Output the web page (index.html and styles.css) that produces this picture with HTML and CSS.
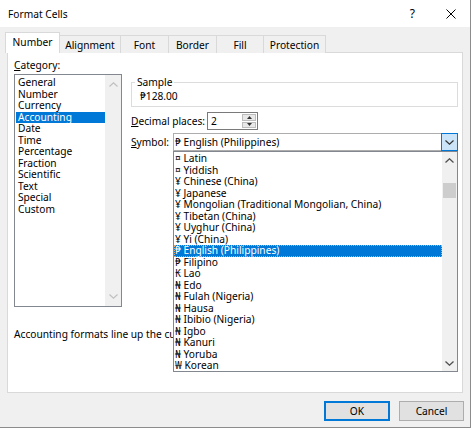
FILE: index.html
```html
<!DOCTYPE html>
<html>
<head>
<meta charset="utf-8">
<link rel="stylesheet" href="styles.css">
</head>
<body>
<div class="dialog">
  <div class="titlebar">
    <span class="title">Format Cells</span>
    <span class="help">?</span>
    <span class="close"><svg width="10" height="10" viewBox="0 0 10 10"><path d="M0.5 0.5 L9.5 9.5 M9.5 0.5 L0.5 9.5" stroke="#000" stroke-width="1" fill="none"/></svg></span>
  </div>
  <div class="tabs">
    <div class="tab active w-number">Number</div>
    <div class="tab w-align">Alignment</div>
    <div class="tab w-font">Font</div>
    <div class="tab w-border">Border</div>
    <div class="tab w-fill">Fill</div>
    <div class="tab w-prot">Protection</div>
  </div>
  <div class="panel">
    <div class="cols">
      <div class="leftcol">
        <div class="lbl"><u>C</u>ategory:</div>
        <div class="listbox">
          <ul class="items">
            <li>General</li>
            <li>Number</li>
            <li>Currency</li>
            <li class="sel">Accounting</li>
            <li>Date</li>
            <li>Time</li>
            <li>Percentage</li>
            <li>Fraction</li>
            <li>Scientific</li>
            <li>Text</li>
            <li>Special</li>
            <li>Custom</li>
          </ul>
          <div class="vscroll disabled">
            <svg class="arrow" width="9" height="5" viewBox="0 0 9 5"><path d="M0.5 4.5 L4.5 0.8 L8.5 4.5" stroke="#c0c0c0" stroke-width="1.2" fill="none"/></svg>
            <svg class="arrow" width="9" height="5" viewBox="0 0 9 5"><path d="M0.5 0.5 L4.5 4.2 L8.5 0.5" stroke="#c0c0c0" stroke-width="1.2" fill="none"/></svg>
          </div>
        </div>
      </div>
      <div class="rightcol">
        <fieldset class="sample">
          <legend>Sample</legend>
          <div class="sample-val">₱128.00</div>
        </fieldset>
        <div class="row dec">
          <span class="rlabel dec-label"><u>D</u>ecimal places:</span>
          <div class="spin">
            <span class="spin-val">2</span>
            <div class="spinbtns">
              <span class="sb"><svg width="5" height="3" viewBox="0 0 5 3"><path d="M0 3 L2.5 0 L5 3 Z" fill="#333"/></svg></span>
              <span class="sb"><svg width="5" height="3" viewBox="0 0 5 3"><path d="M0 0 L2.5 3 L5 0 Z" fill="#333"/></svg></span>
            </div>
          </div>
        </div>
        <div class="row sym">
          <span class="rlabel sym-label"><u>S</u>ymbol:</span>
          <div class="combo">
            <span class="combo-val">₱ English (Philippines)</span>
            <span class="dropbtn"><svg width="9" height="5" viewBox="0 0 9 5"><path d="M0.5 0.5 L4.5 4.2 L8.5 0.5" stroke="#333" stroke-width="1.2" fill="none"/></svg></span>
            <div class="droplist">
              <ul class="ditems">
                <li>¤ Latin</li>
                <li>¤ Yiddish</li>
                <li>¥ Chinese (China)</li>
                <li>¥ Japanese</li>
                <li>¥ Mongolian (Traditional Mongolian, China)</li>
                <li>¥ Tibetan (China)</li>
                <li>¥ Uyghur (China)</li>
                <li>¥ Yi (China)</li>
                <li class="sel">₱ English (Philippines)</li>
                <li>₱ Filipino</li>
                <li>₭ Lao</li>
                <li>₦ Edo</li>
                <li>₦ Fulah (Nigeria)</li>
                <li>₦ Hausa</li>
                <li>₦ Ibibio (Nigeria)</li>
                <li>₦ Igbo</li>
                <li>₦ Kanuri</li>
                <li>₦ Yoruba</li>
                <li>₩ Korean</li>
              </ul>
              <div class="dscroll">
                <svg class="arrow" width="9" height="5" viewBox="0 0 9 5"><path d="M0.5 4.5 L4.5 0.8 L8.5 4.5" stroke="#505050" stroke-width="1.3" fill="none"/></svg>
                <div class="thumb"></div>
                <div class="spacer"></div>
                <svg class="arrow" width="9" height="5" viewBox="0 0 9 5"><path d="M0.5 0.5 L4.5 4.2 L8.5 0.5" stroke="#505050" stroke-width="1.3" fill="none"/></svg>
              </div>
            </div>
          </div>
        </div>
      </div>
    </div>
    <div class="explain">Accounting formats line up the currency symbols and decimal points in a column.</div>
  </div>
  <div class="buttons">
    <button class="btn ok">OK</button>
    <button class="btn cancel">Cancel</button>
  </div>
</div>
</body>
</html>
```

FILE: styles.css
```css
* { box-sizing: border-box; }
html, body { margin: 0; padding: 0; }
body {
  background: #ffffff;
  font-family: "Noto Sans", "DejaVu Sans", sans-serif;
  font-size: 10.2px;
  color: #000;
}
ul { list-style: none; margin: 0; padding: 0; }

.dialog {
  width: 471px;
  height: 428px;
  background: #f0f0f0;
  border-right: 1px solid #8c8c8c;
  border-bottom: 1px solid #8c8c8c;
  display: flex;
  flex-direction: column;
}

.titlebar {
  height: 27px;
  background: #fff;
  display: flex;
  align-items: center;
  padding-left: 8px;
  flex-shrink: 0;
}
.title { font-size: 10.2px; }
.help { margin-left: auto; font-size: 12px; margin-right: 31px; }
.close { width: 10px; height: 10px; display: flex; margin-right: 14px; }

.tabs {
  height: 26px;
  display: flex;
  align-items: flex-end;
  padding-left: 5px;
  margin-bottom: -1px;
  position: relative;
  z-index: 2;
  flex-shrink: 0;
}
.tab {
  height: 18px;
  border: 1px solid #d9d9d9;
  border-bottom: none;
  margin-right: -1px;
  display: flex;
  align-items: center;
  justify-content: center;
  background: #f0f0f0;
}
.tab.active {
  height: 21px;
  background: #fff;
  padding-bottom: 2px;
}
.w-number { width: 55px; }
.w-align { width: 62px; }
.w-font { width: 49px; }
.w-border { width: 49px; }
.w-fill { width: 48px; }
.w-prot { width: 63px; }

.panel {
  margin: 0 7px;
  height: 341px;
  background: #fff;
  border: 1px solid #d9d9d9;
  padding: 5px 6px 0 6px;
  flex-shrink: 0;
}
.cols { display: flex; align-items: flex-start; }
.leftcol { width: 108px; flex-shrink: 0; }
.lbl { line-height: 15px; height: 15px; }
.listbox {
  margin-top: 1px;
  height: 233px;
  border: 1px solid #828790;
  display: flex;
}
.items { flex: 1; padding: 2px 0 0 1px; }
.items li, .ditems li {
  height: 11.5px;
  line-height: 11.5px;
  padding-left: 2px;
  white-space: nowrap;
}
.items li.sel { background: #0078d7; color: #fff; }
.vscroll {
  width: 16px;
  background: #f0f0f0;
  display: flex;
  flex-direction: column;
  align-items: center;
  justify-content: space-between;
  padding: 7px 0 7px;
}

.rightcol { margin-left: 9px; width: 327px; }
.sample {
  margin: 17px 0 0 0;
  padding: 0 0 3px 3px;
  border: 1px solid #dcdcdc;
  min-width: 0;
}
.sample legend { padding: 0 2px; line-height: 14px; }
.sample-val { line-height: 14px; padding-left: 5px; }

.row { display: flex; align-items: center; }
.rlabel { line-height: 14px; white-space: nowrap; flex-shrink: 0; }
.dec { margin-top: 5px; height: 18px; }
.dec-label { width: 76px; }
.spin {
  width: 51px;
  height: 18px;
  border: 1px solid #7a7a7a;
  display: flex;
  align-items: center;
  padding-left: 3px;
  flex-shrink: 0;
}
.spin-val { flex: 1; }
.spinbtns {
  width: 14px;
  height: 14px;
  margin-right: 1px;
  display: flex;
  flex-direction: column;
  gap: 1px;
}
.sb {
  flex: 1;
  background: #e8e8e8;
  border: 1px solid #bcbcbc;
  display: flex;
  align-items: center;
  justify-content: center;
}
.sym { margin-top: 3px; height: 18px; }
.sym-label { width: 42px; }
.combo {
  position: relative;
  width: 285px;
  height: 18px;
  border: 1px solid #adadad;
  display: flex;
  align-items: center;
  padding-left: 1px;
  flex-shrink: 0;
}
.combo-val { flex: 1; }
.dropbtn {
  width: 17px;
  height: 18px;
  margin: -1px -1px -1px 0;
  background: #cce4f7;
  border: 1px solid #0078d7;
  display: flex;
  align-items: center;
  justify-content: center;
}
.droplist {
  position: absolute;
  top: 17px;
  left: -1px;
  width: 285px;
  height: 221px;
  background: #fff;
  border: 1px solid #828790;
  display: flex;
  z-index: 5;
}
.ditems { flex: 1; padding: 1px 0 0; }
.ditems li { padding-left: 1px; }
.ditems li.sel {
  background: #0078d7;
  color: #fff;
  outline: 1px dotted #e7a86a;
  outline-offset: -1px;
}
.dscroll {
  width: 15px;
  background: #f0f0f0;
  display: flex;
  flex-direction: column;
  align-items: center;
  padding: 6px 0 5px;
}
.thumb {
  width: 13px;
  height: 15px;
  background: #cdcdcd;
  margin-top: 20px;
}
.spacer { flex: 1; }

.explain { margin-top: 20px; line-height: 14px; white-space: nowrap; }

.buttons {
  display: flex;
  justify-content: flex-end;
  gap: 9px;
  padding-right: 6px;
  margin-top: 8px;
}
.btn {
  font-family: "Noto Sans", "DejaVu Sans", sans-serif;
  font-size: 10.2px;
  height: 20px;
  background: #e1e1e1;
  border: 1px solid #adadad;
  padding: 0;
  color: #000;
}
.ok { width: 66px; border: 2px solid #0078d7; }
.cancel { width: 65px; }
```
